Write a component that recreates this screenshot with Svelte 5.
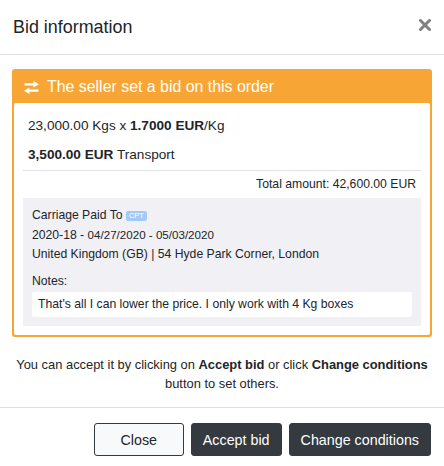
<script>
  const title = "Bid information";
</script>

<div class="modal">
  <header class="head">
    <h1>{title}</h1>
    <svg class="x" viewBox="0 0 12 12" width="12" height="12" aria-hidden="true">
      <path d="M1.5 1.5l9 9M10.5 1.5l-9 9" stroke="#808080" stroke-width="3" stroke-linecap="round" fill="none"/>
    </svg>
  </header>
  <section class="body">
    <div class="card">
      <div class="card-head">
        <svg class="swap" viewBox="0 0 15 13" width="15" height="13" aria-hidden="true">
          <path d="M0.5 2.2H9.5V0L15 3.2 9.5 6.4V4.6H0.5z" fill="#fff"/>
          <path d="M14.5 8.4H5.5V6.4L0 9.8 5.5 13V10.8H14.5z" fill="#fff"/>
        </svg>
        <span>The seller set a bid on this order</span>
      </div>
      <div class="card-body">
        <p class="line first">23,000.00 Kgs x <b>1.7000 EUR</b>/Kg</p>
        <p class="line second"><b>3,500.00 EUR</b> Transport</p>
        <div class="total">Total amount: 42,600.00 EUR</div>
        <div class="details">
          <div class="row">Carriage Paid To <span class="badge">CPT</span></div>
          <div class="row">2020-18 - <small>04/27/2020 - 05/03/2020</small></div>
          <div class="row">United Kingdom (GB) | 54 Hyde Park Corner, London</div>
          <div class="notes-label">Notes:</div>
          <div class="notes">That's all I can lower the price. I only work with 4 Kg boxes</div>
        </div>
      </div>
    </div>
    <p class="hint">You can accept it by clicking on <b>Accept bid</b> or click <b>Change conditions</b> button to set others.</p>
  </section>
  <footer class="foot">
    <button class="btn light">Close</button>
    <button class="btn dark">Accept bid</button>
    <button class="btn dark">Change conditions</button>
  </footer>
</div>

<style>
  :global(body) { margin: 0; background: #fff; }
  .modal { width: 444px; height: 466px; box-sizing: border-box; font-family: "Liberation Sans", Arial, sans-serif; color: #212529; font-size: 12.2px; }
  .head { height: 55px; box-sizing: border-box; border-bottom: 1px solid #dee2e6; display: flex; align-items: flex-start; justify-content: space-between; padding: 0 13px 0 13px; }
  h1 { margin: 0; font-size: 17.9px; font-weight: 400; line-height: 54px; }
  .x { margin-top: 19px; }
  .body { padding: 14px 12px 0; }
  .card { border: 2px solid #f7a635; border-radius: 3px; background: #f7a635; }
  .card-head { height: 32px; display: flex; align-items: center; gap: 8px; padding-left: 10px; color: #fff; font-size: 15.9px; }
  .swap { flex: none; }
  .card-body { background: #fff; border-radius: 2px; padding: 0 9px 9px; }
  .line { margin: 0; font-size: 13.6px; line-height: 20px; padding-left: 5px; }
  .first { padding-top: 13px; }
  .second { padding-top: 9px; padding-bottom: 5px; border-bottom: 1px solid #dee2e6; }
  .total { text-align: right; line-height: 27px; padding-right: 5px; }
  .details { background: #f1f0f5; padding: 8px 9px 9px; }
  .row { line-height: 19px; }
  small { font-size: 11.6px; }
  .badge { display: inline-block; background: #a3c9f5; color: #fff; font-size: 7.5px; line-height: 10px; padding: 0 3px; border-radius: 2px; vertical-align: 1px; }
  .notes-label { margin-top: 8px; line-height: 18px; }
  .notes { background: #fff; border-radius: 2px; margin-top: 2px; padding: 0 6px; line-height: 25px; }
  .hint { margin: 18px 0 0; text-align: center; line-height: 19px; font-size: 12.9px; padding: 0 2px; }
  .foot { margin-top: 14px; border-top: 1px solid #dee2e6; display: flex; justify-content: flex-end; gap: 7px; padding: 15px 13px 0; }
  .btn { height: 33px; box-sizing: border-box; font: 14.3px "Liberation Sans", Arial, sans-serif; border-radius: 3px; border: 1px solid #343a40; padding: 0 11px; }
  .light { width: 90px; background: #f8f9fa; color: #212529; }
  .dark { background: #343a40; color: #fff; }
</style>
